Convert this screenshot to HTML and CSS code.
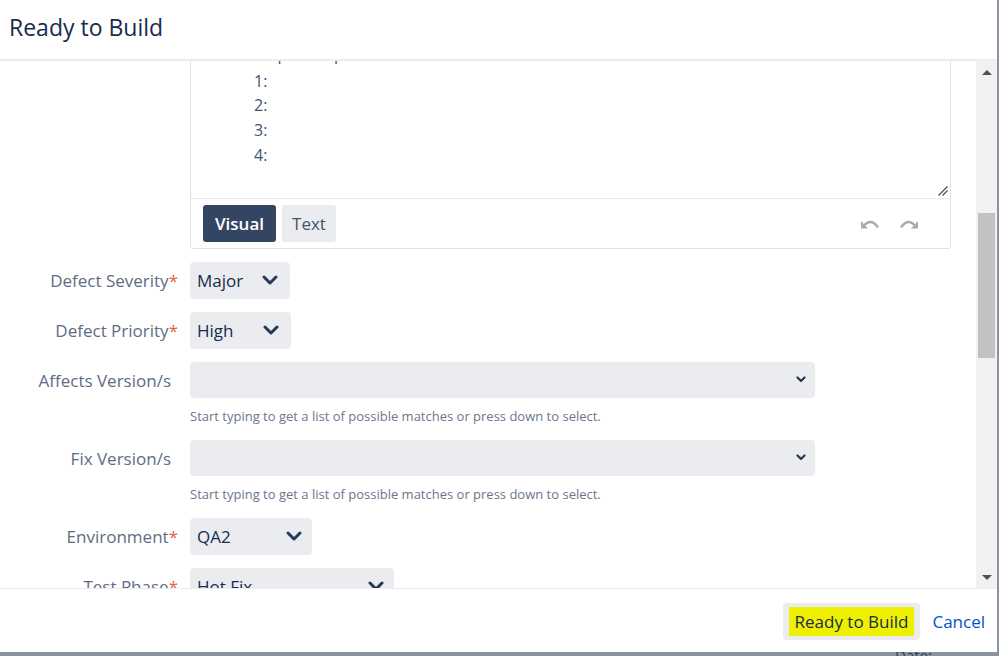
FILE: index.html
```html
<!DOCTYPE html>
<html lang="en">
<head>
    <meta charset="UTF-8" />
    <meta name="viewport" content="width=device-width, initial-scale=1.0"/>
    <title>Ready to Build</title>
    <link rel="stylesheet" href="styles.css">
</head>
<body>
    <div class="dialog">
        <header class="dialog-header">
            <h2 class="dialog-title">Ready to Build</h2>
        </header>

        <div class="dialog-main">
            <div class="dialog-content">
                <div class="field-row">
                    <div class="field-label"></div>
                    <div class="editor">
                        <div class="editor-text">
                            <p class="editor-line editor-line-first">Steps to reproduce:</p>
                            <p class="editor-line">1:</p>
                            <p class="editor-line">2:</p>
                            <p class="editor-line">3:</p>
                            <p class="editor-line">4:</p>
                            <svg class="resize-handle" width="10" height="10" viewBox="0 0 10 10">
                                <path d="M9.5 0.5 L0.5 9.5 M9.5 4.5 L4.5 9.5" stroke="#4a4a4a" stroke-width="1.2" fill="none"/>
                            </svg>
                        </div>
                        <div class="editor-toolbar">
                            <div class="mode-tabs">
                                <button class="mode-tab mode-tab-active">Visual</button>
                                <button class="mode-tab">Text</button>
                            </div>
                            <div class="history">
                                <svg class="history-icon" width="18" height="10" viewBox="0 0 18 10">
                                    <polygon points="0,2 0,9.5 7,9.5" fill="#a5adba"/>
                                    <path d="M3 6.5 Q10 -1.5 17 8.5" stroke="#a5adba" stroke-width="2.4" fill="none"/>
                                </svg>
                                <svg class="history-icon" width="18" height="10" viewBox="0 0 18 10">
                                    <polygon points="18,2 18,9.5 11,9.5" fill="#a5adba"/>
                                    <path d="M15 6.5 Q8 -1.5 1 8.5" stroke="#a5adba" stroke-width="2.4" fill="none"/>
                                </svg>
                            </div>
                        </div>
                    </div>
                </div>

                <div class="field-row">
                    <label class="field-label">Defect Severity<span class="required">*</span></label>
                    <div class="select select-severity">
                        <span class="select-value">Major</span>
                        <svg class="chevron" width="16" height="10" viewBox="0 0 16 10"><polyline points="2,2 8,8 14,2" /></svg>
                    </div>
                </div>

                <div class="field-row">
                    <label class="field-label">Defect Priority<span class="required">*</span></label>
                    <div class="select select-priority">
                        <span class="select-value">High</span>
                        <svg class="chevron" width="16" height="10" viewBox="0 0 16 10"><polyline points="2,2 8,8 14,2" /></svg>
                    </div>
                </div>

                <div class="field-row">
                    <label class="field-label field-label-optional">Affects Version/s</label>
                    <div class="field-body">
                        <div class="select select-wide">
                            <span class="select-value"></span>
                            <svg class="chevron-small" width="10" height="7" viewBox="0 0 10 7"><polyline points="1.5,1.5 5,5 8.5,1.5" /></svg>
                        </div>
                        <p class="field-help">Start typing to get a list of possible matches or press down to select.</p>
                    </div>
                </div>

                <div class="field-row">
                    <label class="field-label field-label-optional">Fix Version/s</label>
                    <div class="field-body">
                        <div class="select select-wide">
                            <span class="select-value"></span>
                            <svg class="chevron-small" width="10" height="7" viewBox="0 0 10 7"><polyline points="1.5,1.5 5,5 8.5,1.5" /></svg>
                        </div>
                        <p class="field-help">Start typing to get a list of possible matches or press down to select.</p>
                    </div>
                </div>

                <div class="field-row">
                    <label class="field-label">Environment<span class="required">*</span></label>
                    <div class="select select-env">
                        <span class="select-value">QA2</span>
                        <svg class="chevron" width="16" height="10" viewBox="0 0 16 10"><polyline points="2,2 8,8 14,2" /></svg>
                    </div>
                </div>

                <div class="field-row">
                    <label class="field-label">Test Phase<span class="required">*</span></label>
                    <div class="select select-phase">
                        <span class="select-value">Hot Fix</span>
                        <svg class="chevron" width="16" height="10" viewBox="0 0 16 10"><polyline points="2,2 8,8 14,2" /></svg>
                    </div>
                </div>
            </div>

            <div class="scrollbar">
                <span class="scroll-arrow scroll-up"></span>
                <span class="scroll-thumb"></span>
                <span class="scroll-arrow scroll-down"></span>
            </div>
        </div>

        <footer class="dialog-footer">
            <button class="btn btn-submit"><span class="highlight">Ready to Build</span></button>
            <a class="btn-link" href="#">Cancel</a>
        </footer>
    </div>

    <div class="backdrop-peek">
        <span class="backdrop-text">Date:</span>
    </div>
</body>
</html>
```

FILE: styles.css
```css
* {
    margin: 0;
    padding: 0;
    box-sizing: border-box;
}

body {
    background-color: #8993a4;
    font-family: "Open Sans", "Noto Sans", sans-serif;
    color: #172b4d;
    width: 999px;
    height: 656px;
    overflow: hidden;
}

.dialog {
    width: 997px;
    height: 652px;
    background-color: white;
    display: flex;
    flex-direction: column;
}

.dialog-header {
    height: 61px;
    padding: 0 9px;
    border-bottom: 2px solid #ebecf0;
    display: flex;
    align-items: center;
}

.dialog-title {
    font-size: 23px;
    font-weight: 400;
    color: #172b4d;
    margin-top: -6px;
}

.dialog-main {
    flex: 1;
    display: flex;
    min-height: 0;
}

.dialog-content {
    flex: 1;
    overflow: hidden;
}

/* form rows */
.field-row {
    display: flex;
    align-items: flex-start;
    gap: 12px;
    margin-bottom: 13px;
}

.field-label {
    width: 178px;
    flex-shrink: 0;
    text-align: right;
    font-size: 17px;
    line-height: 37px;
    color: #5e6c84;
}

.field-label-optional {
    padding-right: 7px;
}

.required {
    color: #e8603f;
}

.field-body {
    display: flex;
    flex-direction: column;
}

.field-help {
    font-size: 13px;
    line-height: 16px;
    color: #6b778c;
    margin-top: 10px;
    margin-bottom: 3px;
}

.select {
    height: 37px;
    background-color: #ebecf0;
    border-radius: 4px;
    display: flex;
    align-items: center;
    justify-content: space-between;
    padding: 0 12px 0 7px;
    font-size: 17px;
    color: #172b4d;
}

.select-severity { width: 100px; }
.select-priority { width: 101px; }
.select-env { width: 122px; padding-right: 10px; }
.select-phase { width: 204px; padding-right: 10px; }

.select-wide {
    width: 625px;
    height: 36px;
    padding-right: 9px;
}

.chevron polyline {
    fill: none;
    stroke: #253858;
    stroke-width: 3;
    stroke-linecap: round;
    stroke-linejoin: round;
}

.chevron-small polyline {
    fill: none;
    stroke: #253858;
    stroke-width: 2.2;
    stroke-linecap: round;
    stroke-linejoin: round;
}

/* editor */
.editor {
    width: 761px;
    margin-top: -32px;
    border: 1px solid #dfe1e6;
    border-radius: 3px;
}

.editor-text {
    position: relative;
    padding: 12px 0 30px 63px;
    border-bottom: 1px solid #ebecf0;
}

.editor-line {
    font-size: 16px;
    line-height: 24.7px;
    color: #42526e;
}

.editor-line-first {
    margin-bottom: 2px;
}

.resize-handle {
    position: absolute;
    right: 2px;
    bottom: 2px;
}

.editor-toolbar {
    display: flex;
    align-items: center;
    justify-content: space-between;
    padding: 6px 32px 6px 12px;
}

.mode-tabs {
    display: flex;
    gap: 6px;
}

.mode-tab {
    height: 37px;
    border: none;
    border-radius: 3px;
    background-color: #ebecf0;
    color: #42526e;
    font-family: inherit;
    font-size: 17px;
    padding: 0 10px;
}

.mode-tab-active {
    background-color: #344563;
    color: white;
    font-weight: 600;
    padding: 0 12px;
}

.history {
    display: flex;
    gap: 21px;
    padding-top: 2px;
}

/* scrollbar */
.scrollbar {
    width: 21px;
    background-color: #f1f1f1;
    display: flex;
    flex-direction: column;
    align-items: center;
    padding: 9px 0 8px;
}

.scroll-arrow {
    width: 0;
    height: 0;
    border-left: 5px solid transparent;
    border-right: 5px solid transparent;
}

.scroll-up {
    border-bottom: 5px solid #505050;
}

.scroll-down {
    border-top: 5px solid #505050;
    margin-top: auto;
}

.scroll-thumb {
    width: 17px;
    height: 145px;
    margin-top: 138px;
    background-color: #c1c1c1;
}

/* footer */
.dialog-footer {
    height: 64px;
    border-top: 1px solid #ebecf0;
    display: flex;
    align-items: flex-start;
    justify-content: flex-end;
    gap: 12px;
    padding: 14px 12px 0 0;
}

.btn {
    height: 37px;
    border: none;
    border-radius: 4px;
    background-color: #ebecf0;
    font-family: inherit;
    font-size: 17px;
    color: #172b4d;
    padding: 0 6px;
}

.highlight {
    background-color: #eef000;
    padding: 3px 6px;
}

.btn-link {
    font-size: 17px;
    line-height: 37px;
    color: #0052cc;
    text-decoration: none;
}

.backdrop-peek {
    height: 4px;
    overflow: hidden;
    padding-left: 895px;
}

.backdrop-text {
    display: block;
    margin-top: -5px;
    font-size: 15px;
    line-height: 16px;
    color: #2f3a4d;
}
```
